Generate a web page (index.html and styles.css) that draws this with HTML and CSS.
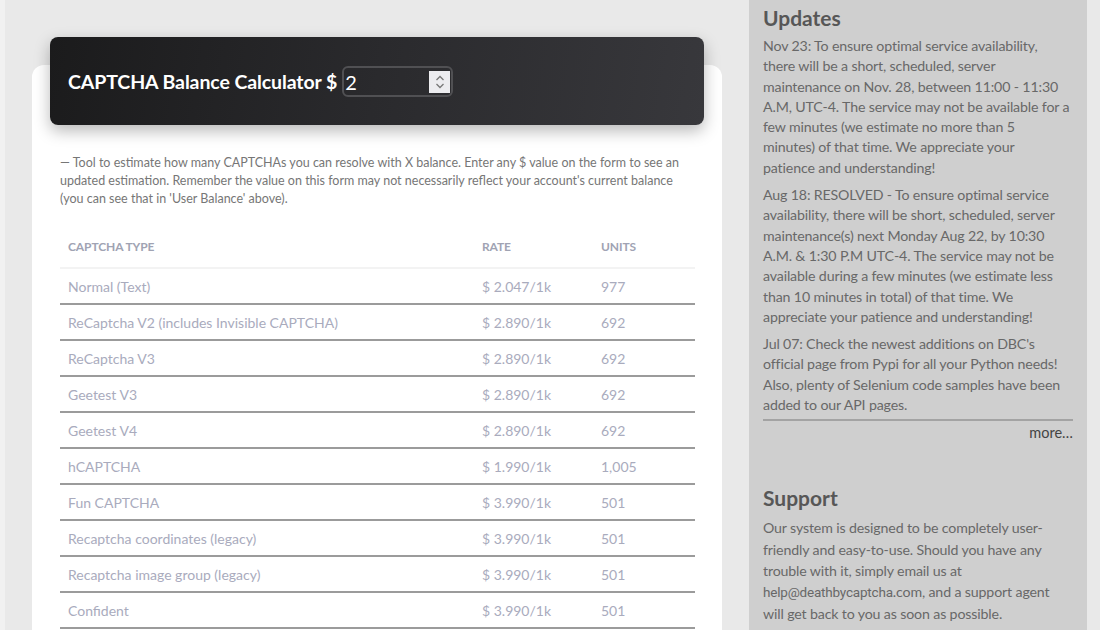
FILE: index.html
```html
<!DOCTYPE html>
<html>
<head>
<meta charset="utf-8">
<link rel="stylesheet" href="styles.css">
</head>
<body>
<div class="page">
  <main class="main">
    <section class="card">
      <div class="calc-head">
        <span class="calc-title">CAPTCHA Balance Calculator $</span>
        <span class="amount">
          <span class="amount-val">2</span>
          <span class="spinner">
            <svg width="12" height="16" viewBox="0 0 12 16"><path d="M2.5 6 L6 2.5 L9.5 6" fill="none" stroke="#777" stroke-width="1.3"/><path d="M2.5 10 L6 13.5 L9.5 10" fill="none" stroke="#777" stroke-width="1.3"/></svg>
          </span>
        </span>
      </div>
      <p class="desc">— Tool to estimate how many CAPTCHAs you can resolve with X balance. Enter any $ value on the form to see an updated estimation. Remember the value on this form may not necessarily reflect your account's current balance (you can see that in 'User Balance' above).</p>
      <table class="rates">
        <thead>
          <tr><th class="c-type">CAPTCHA TYPE</th><th class="c-rate">RATE</th><th class="c-units">UNITS</th></tr>
        </thead>
        <tbody>
          <tr><td>Normal (Text)</td><td>$ 2.047/1k</td><td>977</td></tr>
          <tr><td>ReCaptcha V2 (includes Invisible CAPTCHA)</td><td>$ 2.890/1k</td><td>692</td></tr>
          <tr><td>ReCaptcha V3</td><td>$ 2.890/1k</td><td>692</td></tr>
          <tr><td>Geetest V3</td><td>$ 2.890/1k</td><td>692</td></tr>
          <tr><td>Geetest V4</td><td>$ 2.890/1k</td><td>692</td></tr>
          <tr><td>hCAPTCHA</td><td>$ 1.990/1k</td><td>1,005</td></tr>
          <tr><td>Fun CAPTCHA</td><td>$ 3.990/1k</td><td>501</td></tr>
          <tr><td>Recaptcha coordinates (legacy)</td><td>$ 3.990/1k</td><td>501</td></tr>
          <tr><td>Recaptcha image group (legacy)</td><td>$ 3.990/1k</td><td>501</td></tr>
          <tr><td>Confident</td><td>$ 3.990/1k</td><td>501</td></tr>
        </tbody>
      </table>
    </section>
  </main>
  <aside class="side">
    <h2 class="side-h">Updates</h2>
    <p class="side-p">Nov 23: To ensure optimal service availability,<br>there will be a short, scheduled, server<br>maintenance on Nov. 28, between 11:00 - 11:30<br>A.M, UTC-4. The service may not be available for a<br>few minutes (we estimate no more than 5<br>minutes) of that time. We appreciate your<br>patience and understanding!</p>
    <p class="side-p">Aug 18: RESOLVED - To ensure optimal service<br>availability, there will be short, scheduled, server<br>maintenance(s) next Monday Aug 22, by 10:30<br>A.M. &amp; 1:30 P.M UTC-4. The service may not be<br>available during a few minutes (we estimate less<br>than 10 minutes in total) of that time. We<br>appreciate your patience and understanding!</p>
    <p class="side-p">Jul 07: Check the newest additions on DBC's<br>official page from Pypi for all your Python needs!<br>Also, plenty of Selenium code samples have been<br>added to our API pages.</p>
    <div class="more">more…</div>
    <h2 class="side-h support-h">Support</h2>
    <p class="side-p support-p">Our system is designed to be completely user-<br>friendly and easy-to-use. Should you have any<br>trouble with it, simply email us at<br><span class="email">help@deathbycaptcha</span>.com, and a support agent<br>will get back to you as soon as possible.</p>
  </aside>
  <div class="rest"></div>
</div>
</body>
</html>
```
FILE: styles.css
```css
html, body {
  margin: 0;
  padding: 0;
}
body {
  background: #f1f1f1;
  font-family: "Lato", "Open Sans", sans-serif;
  width: 1100px;
  height: 630px;
  overflow: hidden;
}
.page {
  display: flex;
  margin-left: 5px;
  height: 630px;
  background: #e9e9e9;
}
.main {
  width: 744px;
  flex: none;
  padding-top: 65px;
  box-sizing: border-box;
}
.card {
  display: flow-root;
  margin-left: 27px;
  width: 690px;
  background: #fff;
  border-radius: 12px 12px 0 0;
  height: 565px;
  padding: 0 18px;
  box-sizing: border-box;
}
.calc-head {
  margin-top: -28px;
  height: 88px;
  border-radius: 8px;
  background: linear-gradient(100deg, #1b1b1c 0%, #2a2a2d 50%, #38383c 100%);
  box-shadow: 0 6px 16px rgba(0,0,0,0.28);
  display: flex;
  align-items: center;
  padding-left: 18px;
  gap: 5px;
}
.calc-title {
  color: #fff;
  font-weight: 700;
  font-size: 19.5px;
  letter-spacing: -0.1px;
}
.amount {
  width: 111px;
  height: 31px;
  box-sizing: border-box;
  border: 2px solid #505053;
  border-radius: 6px;
  display: flex;
  align-items: center;
  justify-content: space-between;
  padding: 0 1px 0 1px;
  margin-top: 1px;
}
.amount-val {
  color: #fff;
  font-size: 20px;
  line-height: 1;
}
.spinner {
  width: 21px;
  height: 22px;
  background: #ececef;
  display: flex;
  align-items: center;
  justify-content: center;
}
.desc {
  margin: 29px 10px 0 10px;
  font-size: 12.5px;
  line-height: 18px;
  color: #767676;
}
.rates {
  margin: 17px 9px 0 10px;
  width: 635px;
  border-collapse: collapse;
}
.rates th {
  text-align: left;
  font-size: 12px;
  font-weight: 700;
  color: #a0a3b3;
  height: 42px;
  padding: 0 8px;
  border-bottom: 2px solid #f3f3f3;
  letter-spacing: -0.1px;
}
.c-type { width: 398px; }
.c-rate { width: 103px; }
.rates td {
  height: 34px;
  padding: 0 8px;
  font-size: 14px;
  color: #a9abbd;
  border-bottom: 2px solid #9b9b9b;
}
.side {
  width: 338px;
  flex: none;
  background: #cfcfcf;
  padding: 5px 10px 0 14px;
  box-sizing: border-box;
  color: #686868;
  overflow: hidden;
}
.side-h {
  margin: 0 0 5px 0;
  font-size: 21px;
  line-height: 26px;
  font-weight: 700;
  color: #575757;
}
.side-p {
  margin: 2px 0 7px 0;
  font-size: 14.2px;
  letter-spacing: -0.15px;
  line-height: 20.3px;
  white-space: nowrap;
}
.more {
  border-top: 2px solid #a3a3a3;
  margin-top: -3px;
  margin-right: 4px;
  padding-top: 2px;
  text-align: right;
  font-size: 14.5px;
  line-height: 20px;
  color: #444;
}
.support-h {
  margin-top: 42px;
  margin-bottom: 6px;
}
.support-p {
  margin-top: 3px;
  line-height: 21.3px;
}
.email {
  font-family: "Roboto", "Liberation Sans", sans-serif;
  font-size: 13.5px;
  letter-spacing: -0.2px;
  line-height: 1;
}
.rest {
  flex: 1;
}
```
